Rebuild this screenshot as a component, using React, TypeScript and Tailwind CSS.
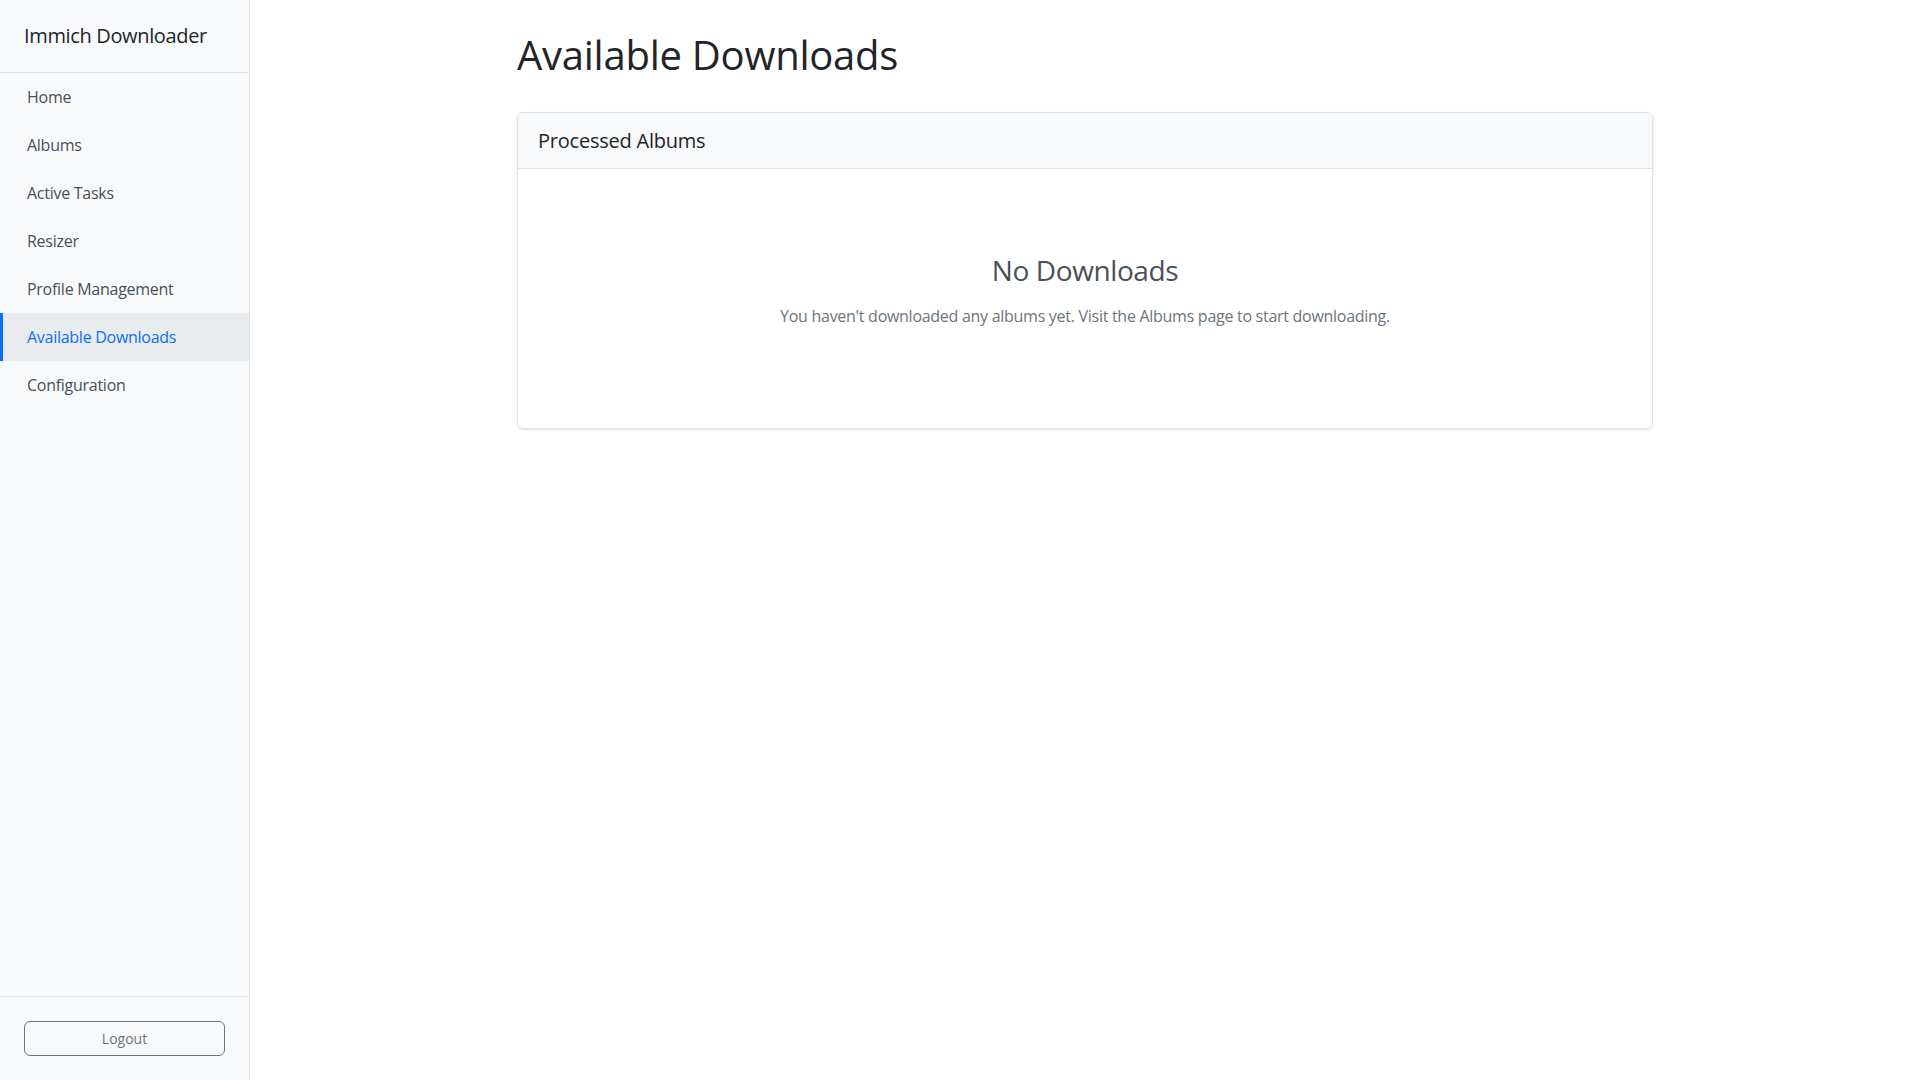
const NAV = ["Home", "Albums", "Active Tasks", "Resizer", "Profile Management", "Available Downloads", "Configuration"]
const ACTIVE = "Available Downloads"

function Sidebar() {
  return (
    <aside className="w-[250px] shrink-0 h-screen flex flex-col bg-[#f8f9fa] border-r border-[#dee2e6]">
      <div className="h-[73px] border-b border-[#dee2e6] flex items-center px-6">
        <span className="text-[20px] tracking-[-0.35px] text-[#212529]">Immich Downloader</span>
      </div>
      <nav className="flex-1 flex flex-col">
        {NAV.map((item) => {
          const active = item === ACTIVE
          return (
            <a
              key={item}
              href="#"
              className={
                active
                  ? "h-12 flex items-center pl-6 border-l-[3px] border-[#0d6efd] bg-[#e9ecef] text-[#0d6efd] text-[16px] tracking-[-0.27px]"
                  : "h-12 flex items-center pl-6 border-l-[3px] border-transparent text-[#495057] text-[16px] tracking-[-0.27px]"
              }
            >
              {item}
            </a>
          )
        })}
      </nav>
      <div className="border-t border-[#dee2e6] p-6">
        <button className="w-full h-[35px] rounded-md border border-[#6c757d] text-[#6c757d] text-[14px] leading-[31px]">Logout</button>
      </div>
    </aside>
  )
}

export default function App() {
  return (
    <div className="flex h-screen bg-white font-['Open_Sans',sans-serif]">
      <Sidebar />
      <main className="flex-1 pt-[31px]">
        <div className="w-[1136px] mx-auto">
          <h1 className="text-[40px] leading-[1.2] tracking-[-0.25px] text-[#212529] mb-[33px]">Available Downloads</h1>
          <div className="border border-[#dee2e6] rounded-md shadow-sm overflow-hidden">
            <div className="bg-[#f8f9fa] border-b border-[#dee2e6] px-5 py-3 text-[20px] leading-[31px] tracking-[-0.23px] text-[#212529]">
              Processed Albums
            </div>
            <div className="pt-[85px] pb-[84px] text-center">
              <h3 className="text-[28px] leading-[1.2] tracking-[-0.4px] text-[#495057] mb-4">No Downloads</h3>
              <p className="text-[16px] leading-6 tracking-[-0.28px] text-[#6c757d] mb-4">
                You haven't downloaded any albums yet. Visit the Albums page to start downloading.
              </p>
            </div>
          </div>
        </div>
      </main>
    </div>
  )
}
